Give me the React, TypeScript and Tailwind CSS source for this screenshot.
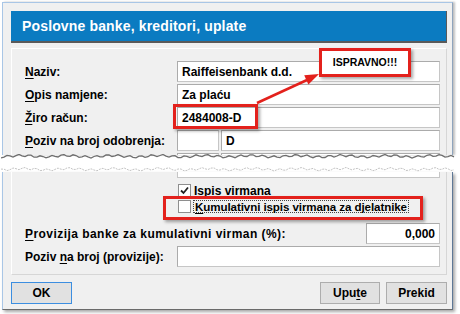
import React from "react";

const RED = "#e3211c";

const U = ({ children }: { children: React.ReactNode }) => (
  <span className="underline underline-offset-[2px]">{children}</span>
);

function Field({ className = "", children }: { className?: string; children?: React.ReactNode }) {
  return (
    <div
      className={`h-[21px] bg-white border border-[#c6c6c6] border-t-[#ababab] border-l-[#ababab] flex items-center px-[4px] ${className}`}
    >
      {children}
    </div>
  );
}

function Row({ label, children }: { label: React.ReactNode; children: React.ReactNode }) {
  return (
    <div className="flex items-center">
      <div className="w-[165px] shrink-0 pl-[13px]">{label}</div>
      {children}
    </div>
  );
}

const torn = (w: number, seed: number) =>
  Array.from({ length: Math.floor(w / 3) + 1 }, (_, i) => {
    const y = 2.2 + Math.sin(i * 1.7 + seed) * 1.1 + Math.sin(i * 0.41 + seed * 2) * 0.7;
    return `${i * 3},${y.toFixed(1)}`;
  }).join(" ");

function CheckBox({ checked }: { checked?: boolean }) {
  return (
    <div className="w-[13px] h-[13px] shrink-0 border border-[#8e8e8e] bg-white flex items-center justify-center">
      {checked && (
        <svg width="9" height="9" viewBox="0 0 9 9">
          <path d="M1 4.5 L3.5 7 L8 1.5" fill="none" stroke="#222" strokeWidth="1.8" />
        </svg>
      )}
    </div>
  );
}

export default function App() {
  return (
    <div className="relative w-[460px] h-[314px] overflow-hidden bg-white font-['Liberation_Sans',Arial,sans-serif] text-[12px] font-bold text-black leading-none">
      {/* upper part of the window */}
      <div className="ml-[2px] mt-[2px] w-[451px] h-[153px] overflow-hidden border-x border-t border-x-[#a9c6e6] border-t-[#a9c6e6] border-r-[#8ea4bd] bg-[#f0f0f0] pl-[8px] pr-[5px] pt-[8px] shadow-[2px_0_2px_rgba(0,0,0,0.25)]">
        <div className="h-[32px] bg-[#0b7bc1] border-b-2 border-r border-[#5a5a5a] flex items-center pl-[11px] text-[14px] tracking-[0.15px] text-white">
          Poslovne banke, kreditori, uplate
        </div>
        <div className="mt-[5px] border border-[#d6d6d6] border-t-white border-l-white pt-[12px] pr-[6px] flex flex-col gap-[2px]">
          <Row label={<><U>N</U>aziv:</>}>
            <Field className="flex-1">Raiffeisenbank d.d.</Field>
          </Row>
          <Row label={<><U>O</U>pis namjene:</>}>
            <Field className="flex-1">Za plaću</Field>
          </Row>
          <Row label={<><U>Ž</U>iro račun:</>}>
            <Field className="flex-1">2484008-D</Field>
          </Row>
          <Row label={<><U>P</U>oziv na broj odobrenja:</>}>
            <Field className="w-[42px]" />
            <Field className="flex-1 ml-[2px]">D</Field>
          </Row>
          <Row label="">
            <Field className="w-[42px]" />
            <Field className="flex-1 ml-[2px]" />
          </Row>
        </div>
      </div>
      <svg width="454" height="6" className="block ml-[1px] -mt-[1px]">
        <polyline points={torn(454, 1)} fill="none" stroke="#6e6e6e" strokeWidth="1.3" />
      </svg>

      {/* lower part of the window */}
      <svg width="454" height="5" className="block ml-[1px] mt-[7px]">
        <polyline points={torn(454, 4)} fill="none" stroke="#c4c4c4" strokeWidth="1" strokeDasharray="2 1" />
      </svg>
      <div className="ml-[2px] w-[451px] h-[138px] border-x border-b border-x-[#a9c6e6] border-r-[#5e7896] border-b-[#6a6a6a] bg-[#f0f0f0] pl-[8px] pr-[5px] shadow-[2px_2px_3px_rgba(0,0,0,0.35)]">
        <div className="border-x border-b border-[#d6d6d6] border-l-white pr-[6px] pb-[7px]">
          <div className="ml-[165px] h-[6px] border-x border-b border-[#c6c6c6] bg-white" />
          <div className="mt-[6px] ml-[166px] flex items-center gap-[2px] h-[13px]">
            <CheckBox checked />
            <span className="px-[1px]">
              <U>I</U>spis virmana
            </span>
          </div>
          <div className="relative mt-[3px] ml-[166px] flex items-center gap-[2px] h-[13px]">
            <CheckBox />
            <span className="border border-dotted border-[#444] px-[1px] leading-[11px] text-[11.6px] tracking-[-0.1px]">
              <U>K</U>umulativni ispis virmana za djelatnike
            </span>
            <div className="absolute -left-[15px] -top-[4px] w-[260px] h-[24px] border-[3px] border-[#e3211c] shadow-[2px_2px_3px_rgba(0,0,0,0.35)]" />
          </div>
          <div className="mt-[10px] flex items-center">
            <div className="flex-1 pl-[13px] tracking-[0.45px]">
              <U>P</U>rovizija banke za kumulativni virman (%):
            </div>
            <Field className="w-[74px] justify-end">0,000</Field>
          </div>
          <div className="mt-[2px]">
            <Row label={<>Poziv <U>n</U>a broj (provizije):</>}>
              <Field className="flex-1" />
            </Row>
          </div>
        </div>
        <div className="mt-[7px] flex items-center">
          <button className="w-[61px] h-[22px] bg-[#e1e1e1] border border-[#3c8ee0] font-bold">OK</button>
          <div className="flex-1" />
          <button className="w-[60px] h-[22px] bg-[#e1e1e1] border border-[#adadad] font-bold">
            Upu<U>t</U>e
          </button>
          <button className="ml-[6px] w-[61px] h-[22px] bg-[#e1e1e1] border border-[#adadad] font-bold">
            Prekid
          </button>
        </div>
      </div>

      {/* annotations */}
      <div className="absolute left-[173px] top-[104px] w-[85px] h-[25px] border-[3px] border-[#e3211c] shadow-[2px_2px_3px_rgba(0,0,0,0.35)]" />
      <div className="absolute left-[319px] top-[48px] w-[92px] h-[29px] border-[3px] border-[#e3211c] bg-white flex items-center justify-center text-[10.5px] shadow-[2px_2px_3px_rgba(0,0,0,0.35)]">
        ISPRAVNO!!!
      </div>
      <svg className="absolute left-0 top-0 pointer-events-none" width="460" height="314">
        <line x1="257" y1="103" x2="307" y2="80" stroke={RED} strokeWidth="2.5" />
        <polygon points="319,74 308.4,84.4 304.2,75.3" fill={RED} />
      </svg>
    </div>
  );
}
